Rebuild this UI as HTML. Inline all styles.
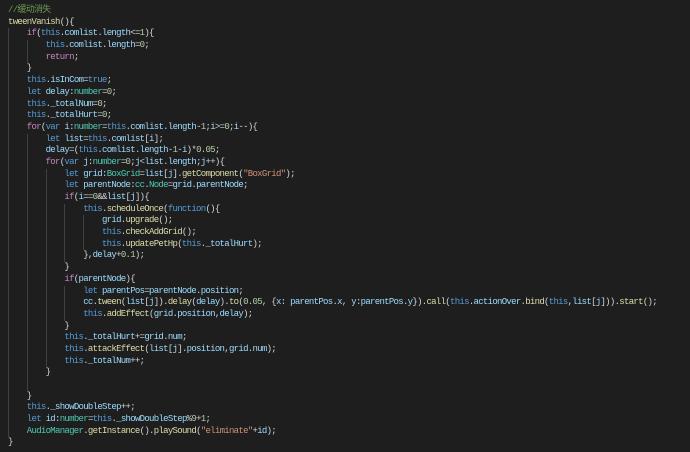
<!DOCTYPE html>
<html><head><meta charset="utf-8"><style>
html,body{margin:0;padding:0;background:#1e1e1e;width:690px;height:452px;overflow:hidden}
.code{margin:0;padding:5px 0 0 8px;font-family:"Liberation Mono","Noto Sans CJK SC",monospace;font-size:9px;letter-spacing:-0.7px;line-height:11.7px;color:#d4d4d4}
.l{display:block;height:11.7px;white-space:pre}
i{display:inline-block;width:18.8px;height:11.7px;vertical-align:top;border-left:1px solid #404040;box-sizing:border-box}
.c{color:#6a9955}.k{color:#569cd6}.p{color:#c586c0}.f{color:#dcdcaa}.v{color:#9cdcfe}.t{color:#4ec9b0}.n{color:#b5cea8}.s{color:#ce9178}
</style></head><body><div class="code">
<span class="l"><span class="c">//缓动消失</span></span>
<span class="l"><span class="f">tweenVanish</span>(){</span>
<span class="l"><i></i><span class="p">if</span>(<span class="k">this</span>.<span class="v">comlist</span>.<span class="v">length</span>&lt;=<span class="n">1</span>){</span>
<span class="l"><i></i><i></i><span class="k">this</span>.<span class="v">comlist</span>.<span class="v">length</span>=<span class="n">0</span>;</span>
<span class="l"><i></i><i></i><span class="p">return</span>;</span>
<span class="l"><i></i>}</span>
<span class="l"><i></i><span class="k">this</span>.<span class="v">isInCom</span>=<span class="k">true</span>;</span>
<span class="l"><i></i><span class="k">let</span> <span class="v">delay</span>:<span class="t">number</span>=<span class="n">0</span>;</span>
<span class="l"><i></i><span class="k">this</span>.<span class="v">_totalNum</span>=<span class="n">0</span>;</span>
<span class="l"><i></i><span class="k">this</span>.<span class="v">_totalHurt</span>=<span class="n">0</span>;</span>
<span class="l"><i></i><span class="p">for</span>(<span class="k">var</span> <span class="v">i</span>:<span class="t">number</span>=<span class="k">this</span>.<span class="v">comlist</span>.<span class="v">length</span>-<span class="n">1</span>;<span class="v">i</span>&gt;=<span class="n">0</span>;<span class="v">i</span>--){</span>
<span class="l"><i></i><i></i><span class="k">let</span> <span class="v">list</span>=<span class="k">this</span>.<span class="v">comlist</span>[<span class="v">i</span>];</span>
<span class="l"><i></i><i></i><span class="v">delay</span>=(<span class="k">this</span>.<span class="v">comlist</span>.<span class="v">length</span>-<span class="n">1</span>-<span class="v">i</span>)*<span class="n">0.05</span>;</span>
<span class="l"><i></i><i></i><span class="p">for</span>(<span class="k">var</span> <span class="v">j</span>:<span class="t">number</span>=<span class="n">0</span>;<span class="v">j</span>&lt;<span class="v">list</span>.<span class="v">length</span>;<span class="v">j</span>++){</span>
<span class="l"><i></i><i></i><i></i><span class="k">let</span> <span class="v">grid</span>:<span class="t">BoxGrid</span>=<span class="v">list</span>[<span class="v">j</span>].<span class="f">getComponent</span>(<span class="s">"BoxGrid"</span>);</span>
<span class="l"><i></i><i></i><i></i><span class="k">let</span> <span class="v">parentNode</span>:<span class="t">cc</span>.<span class="t">Node</span>=<span class="v">grid</span>.<span class="v">parentNode</span>;</span>
<span class="l"><i></i><i></i><i></i><span class="p">if</span>(<span class="v">i</span>==<span class="n">0</span>&amp;&amp;<span class="v">list</span>[<span class="v">j</span>]){</span>
<span class="l"><i></i><i></i><i></i><i></i><span class="k">this</span>.<span class="f">scheduleOnce</span>(<span class="k">function</span>(){</span>
<span class="l"><i></i><i></i><i></i><i></i><i></i><span class="v">grid</span>.<span class="f">upgrade</span>();</span>
<span class="l"><i></i><i></i><i></i><i></i><i></i><span class="k">this</span>.<span class="f">checkAddGrid</span>();</span>
<span class="l"><i></i><i></i><i></i><i></i><i></i><span class="k">this</span>.<span class="f">updatePetHp</span>(<span class="k">this</span>.<span class="v">_totalHurt</span>);</span>
<span class="l"><i></i><i></i><i></i><i></i>},<span class="v">delay</span>+<span class="n">0.1</span>);</span>
<span class="l"><i></i><i></i><i></i>}</span>
<span class="l"><i></i><i></i><i></i><span class="p">if</span>(<span class="v">parentNode</span>){</span>
<span class="l"><i></i><i></i><i></i><i></i><span class="k">let</span> <span class="v">parentPos</span>=<span class="v">parentNode</span>.<span class="v">position</span>;</span>
<span class="l"><i></i><i></i><i></i><i></i><span class="v">cc</span>.<span class="f">tween</span>(<span class="v">list</span>[<span class="v">j</span>]).<span class="f">delay</span>(<span class="v">delay</span>).<span class="f">to</span>(<span class="n">0.05</span>, {<span class="v">x</span>: <span class="v">parentPos</span>.<span class="v">x</span>, <span class="v">y</span>:<span class="v">parentPos</span>.<span class="v">y</span>}).<span class="f">call</span>(<span class="k">this</span>.<span class="v">actionOver</span>.<span class="f">bind</span>(<span class="k">this</span>,<span class="v">list</span>[<span class="v">j</span>])).<span class="f">start</span>();</span>
<span class="l"><i></i><i></i><i></i><i></i><span class="k">this</span>.<span class="f">addEffect</span>(<span class="v">grid</span>.<span class="v">position</span>,<span class="v">delay</span>);</span>
<span class="l"><i></i><i></i><i></i>}</span>
<span class="l"><i></i><i></i><i></i><span class="k">this</span>.<span class="v">_totalHurt</span>+=<span class="v">grid</span>.<span class="v">num</span>;</span>
<span class="l"><i></i><i></i><i></i><span class="k">this</span>.<span class="f">attackEffect</span>(<span class="v">list</span>[<span class="v">j</span>].<span class="v">position</span>,<span class="v">grid</span>.<span class="v">num</span>);</span>
<span class="l"><i></i><i></i><i></i><span class="k">this</span>.<span class="v">_totalNum</span>++;</span>
<span class="l"><i></i><i></i>}</span>
<span class="l"><i></i><i></i></span>
<span class="l"><i></i>}</span>
<span class="l"><i></i><span class="k">this</span>.<span class="v">_showDoubleStep</span>++;</span>
<span class="l"><i></i><span class="k">let</span> <span class="v">id</span>:<span class="t">number</span>=<span class="k">this</span>.<span class="v">_showDoubleStep</span>%<span class="n">9</span>+<span class="n">1</span>;</span>
<span class="l"><i></i><span class="t">AudioManager</span>.<span class="f">getInstance</span>().<span class="f">playSound</span>(<span class="s">"eliminate"</span>+<span class="v">id</span>);</span>
<span class="l">}</span>
</div></body></html>
